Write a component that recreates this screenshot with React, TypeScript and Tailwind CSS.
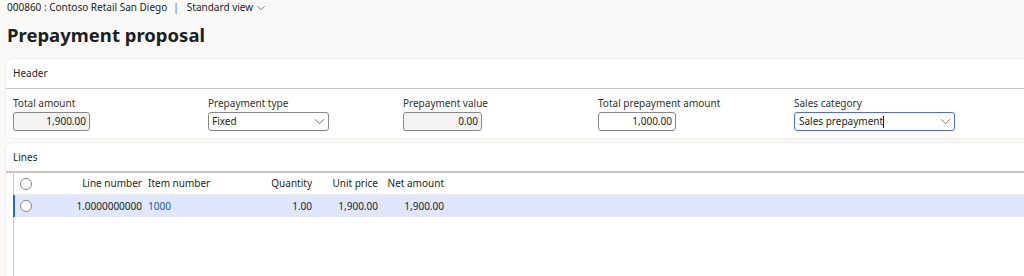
import React from 'react';

const font = { fontFamily: '"Noto Sans", "Open Sans", sans-serif' };

const Chevron: React.FC<{ className?: string }> = ({ className }) => (
  <svg viewBox="0 0 12 8" className={className} fill="none" stroke="currentColor" strokeWidth="1">
    <path d="M1 1.5 L6 6.5 L11 1.5" />
  </svg>
);

const Radio: React.FC = () => (
  <span className="block w-[12px] h-[12px] rounded-full border border-[#8a8886] bg-white" />
);

const Field: React.FC<{ label: string; children: React.ReactNode; className?: string }> = ({ label, children, className }) => (
  <div className={`flex flex-col ${className ?? ''}`}>
    <span className="text-[10px] leading-[13px] text-[#323130] mb-[2px]">{label}</span>
    {children}
  </div>
);

const App: React.FC = () => {
  const lines = [
    { line: '1.0000000000', item: '1000', qty: '1.00', price: '1,900.00', net: '1,900.00' },
  ];

  return (
    <div className="w-[1024px] h-[276px] overflow-hidden bg-[#faf9f8] text-[#201f1e]" style={font}>
      <div className="px-[7px] pt-[1px] text-[10px] leading-[13px] flex items-center">
        <span>000860 : Contoso Retail San Diego</span>
        <span className="text-[#605e5c] ml-[6px] mr-[8px]">|</span>
        <span className="flex items-center gap-[3px]">
          Standard view
          <Chevron className="w-[10px] h-[6px] text-[#605e5c]" />
        </span>
      </div>
      <h1 className="px-[7px] pt-[8px] text-[18.5px] leading-[26px] font-bold text-[#201f1e]">Prepayment proposal</h1>

      <div className="ml-[6px] mt-[11px] bg-white rounded-l-[6px] shadow-[0_0_2px_rgba(0,0,0,0.15)]">
        <div className="h-[30px] flex items-center px-[7px] text-[10px] border-b border-[#c8c6c4]">Header</div>
        <div className="flex px-[7px] pt-[8px] pb-[5px] h-[49px]">
          <Field label="Total amount" className="w-[195px]">
            <div className="w-[77px] h-[19px] rounded-[3px] border border-[#8a8886] bg-[#f4f3f2] text-[10px] leading-[17px] text-right pr-[3px]">1,900.00</div>
          </Field>
          <Field label="Prepayment type" className="w-[195px]">
            <div className="w-[121px] h-[19px] rounded-[3px] border border-[#8a8886] bg-white text-[10px] leading-[17px] pl-[3px] flex items-center justify-between pr-[3px]">
              <span>Fixed</span>
              <Chevron className="w-[11px] h-[7px] text-[#605e5c]" />
            </div>
          </Field>
          <Field label="Prepayment value" className="w-[195px]">
            <div className="w-[79px] h-[19px] rounded-[3px] border border-[#8a8886] bg-[#f4f3f2] text-[10px] leading-[17px] text-right pr-[3px]">0.00</div>
          </Field>
          <Field label="Total prepayment amount" className="w-[196px]">
            <div className="w-[78px] h-[19px] rounded-[3px] border border-[#8a8886] bg-white text-[10px] leading-[17px] text-right pr-[3px]">1,000.00</div>
          </Field>
          <Field label="Sales category" className="w-[200px]">
            <div className="w-[161px] h-[19px] rounded-[3px] border border-[#4f6bed] bg-white text-[10px] leading-[17px] pl-[4px] flex items-center justify-between pr-[3px]">
              <span className="flex items-center">Sales prepayment<span className="w-px h-[12px] bg-[#201f1e]" /></span>
              <Chevron className="w-[11px] h-[7px] text-[#605e5c]" />
            </div>
          </Field>
        </div>
      </div>

      <div className="ml-[6px] mt-[5px] bg-white rounded-tl-[6px] shadow-[0_0_2px_rgba(0,0,0,0.15)] h-[200px]">
        <div className="h-[30px] flex items-center px-[7px] text-[10px] border-b-2 border-[#c8c6c4]">Lines</div>
        <div className="ml-[7px] border-l border-[#c8c6c4] h-full">
          <div className="flex items-center h-[22px] text-[10px] border-b border-[#edebe9]">
            <div className="w-[22px] pl-[6px] flex"><Radio /></div>
            <div className="w-[106px] text-right">Line number</div>
            <div className="w-[6px]" />
            <div className="w-[70px]">Item number</div>
            <div className="w-[94px] text-right">Quantity</div>
            <div className="w-[66px] text-right">Unit price</div>
            <div className="w-[66px] text-right">Net amount</div>
          </div>
          {lines.map((l) => (
            <div key={l.line} className="flex items-center h-[22px] text-[10px] bg-[#dfe6fd] border-l-2 border-[#2266e3] -ml-px">
              <div className="w-[21px] pl-[5px] flex"><Radio /></div>
              <div className="w-[106px] text-right">{l.line}</div>
              <div className="w-[6px]" />
              <div className="w-[70px] text-[#0f5cc5]">{l.item}</div>
              <div className="w-[94px] text-right">{l.qty}</div>
              <div className="w-[66px] text-right">{l.price}</div>
              <div className="w-[66px] text-right">{l.net}</div>
            </div>
          ))}
        </div>
      </div>
    </div>
  );
};

export default App;
